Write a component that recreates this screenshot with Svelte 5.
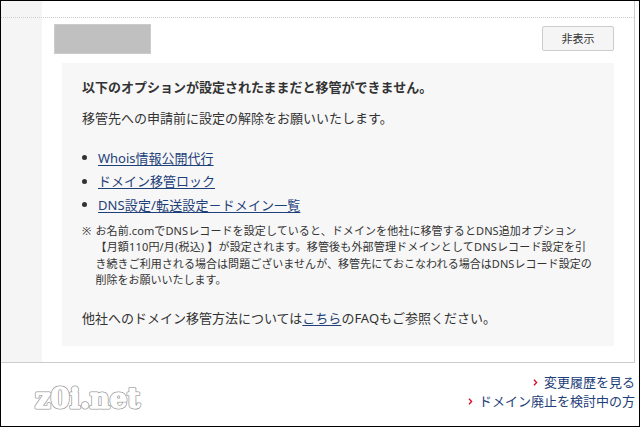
<script lang="ts">
	const options = [
		{ text: 'Whois情報公開代行', spacing: 0 },
		{ text: 'ドメイン移管ロック', spacing: 0 },
		{ text: 'DNS設定/転送設定－ドメイン一覧', spacing: 0.12 }
	];

	const noteLines = [
		{ text: 'お名前.comでDNSレコードを設定していると、ドメインを他社に移管するとDNS追加オプション', spacing: 0.1 },
		{ text: '【月額110円/月(税込) 】が設定されます。移管後も外部管理ドメインとしてDNSレコード設定を引', spacing: 0.17 },
		{ text: 'き続きご利用される場合は問題ございませんが、移管先にておこなわれる場合はDNSレコード設定の', spacing: 0.05 },
		{ text: '削除をお願いいたします。', spacing: 0 }
	];

	const footerLinks = ['変更履歴を見る', 'ドメイン廃止を検討中の方'];
</script>

<div class="frame">
	<div class="table">
		<div class="side"></div>
		<div class="top-row"></div>
		<main class="content">
			<header class="bar">
				<div class="domain"></div>
				<button class="toggle" type="button">非表示</button>
			</header>
			<section class="panel">
				<h2>以下のオプションが設定されたままだと移管ができません。</h2>
				<p class="lead">移管先への申請前に設定の解除をお願いいたします。</p>
				<ul>
					{#each options as option}
						<li><a href="#option" style:letter-spacing="{option.spacing}px">{option.text}</a></li>
					{/each}
				</ul>
				<div class="note">
					<span class="mark">※</span>
					<div>
						{#each noteLines as line}
							<div style:letter-spacing="{line.spacing}px">{line.text}</div>
						{/each}
					</div>
				</div>
				<p class="more">他社へのドメイン移管方法については<a href="#faq">こちら</a>のFAQもご参照ください。</p>
			</section>
		</main>
	</div>
	<footer>
		<svg class="logo" width="120" height="34" viewBox="0 0 120 34">
			<defs>
				<text id="logo-text" x="6" y="26" textLength="105" lengthAdjust="spacingAndGlyphs">z0i.net</text>
			</defs>
			<use class="outline" href="#logo-text" />
			<use class="face" href="#logo-text" />
		</svg>
		<nav>
			{#each footerLinks as link}
				<a href="#link">
					<svg width="5" height="7" viewBox="0 0 5 7"><path d="M1 0.7 3.6 3.5 1 6.3" /></svg>
					{link}
				</a>
			{/each}
		</nav>
	</footer>
</div>

<style>
	:global(body) {
		margin: 0;
		background: #fff;
	}

	.frame {
		box-sizing: border-box;
		width: 640px;
		height: 427px;
		border: 1px solid #000;
		overflow: hidden;
		color: #333;
		font-family: 'Noto Sans', 'Noto Sans CJK JP', sans-serif;
		font-size: 13px;
	}

	.table {
		box-sizing: border-box;
		display: grid;
		grid-template-columns: 41px 1fr;
		grid-template-rows: 17px 1fr;
		width: 634px;
		height: 362px;
		border-right: 1px solid #ccc;
		border-bottom: 1px solid #ccc;
	}

	.side {
		grid-column: 1;
		grid-row: 1 / 3;
		background: #f5f5f5;
	}

	.top-row {
		grid-column: 1 / 3;
		grid-row: 1;
		border-bottom: 1px dotted #ccc;
	}

	.content {
		grid-column: 2;
		grid-row: 2;
		padding: 6px 20px 0 12px;
	}

	.bar {
		display: flex;
		justify-content: space-between;
		height: 39px;
	}

	.domain {
		box-sizing: border-box;
		width: 97px;
		height: 30px;
		border: 1px solid #ccc;
		background: #c0c0c0;
	}

	.toggle {
		box-sizing: border-box;
		width: 72px;
		height: 25px;
		margin-top: 2px;
		padding: 0;
		border: 1px solid #ccc;
		border-radius: 2px;
		background: #f5f5f5;
		color: #333;
		font: 11px/21px 'Noto Sans', 'Noto Sans CJK JP', sans-serif;
	}

	.panel {
		box-sizing: border-box;
		height: 283px;
		margin-left: 8px;
		padding: 14px 0 0 20px;
		background: #f7f7f7;
	}

	h2,
	p {
		margin: 0;
		font-size: 13px;
		line-height: 20px;
		white-space: nowrap;
	}

	.lead {
		margin-top: 11px;
	}

	ul {
		margin: 18px 0 0;
		padding: 0;
		list-style: none;
	}

	li {
		display: flex;
		align-items: center;
		height: 23.5px;
		line-height: 20px;
	}

	li::before {
		content: '';
		width: 5px;
		height: 5px;
		margin-right: 11px;
		border-radius: 50%;
		background: #333;
	}

	a {
		color: #1d4079;
		text-underline-offset: 2px;
	}

	.note {
		display: flex;
		gap: 2px;
		margin-top: 6px;
		font-size: 11px;
		line-height: 16.6px;
		white-space: nowrap;
	}

	.mark {
		width: 11.5px;
	}

	.more {
		margin-top: 19px;
	}

	footer {
		display: flex;
		justify-content: space-between;
		padding: 10px 4px 0 28px;
	}

	.logo {
		margin-top: 9px;
		font-family: 'DejaVu Serif', serif;
		font-size: 27px;
		font-weight: bold;
		fill: #fff;
		stroke-linejoin: round;
	}

	.outline {
		stroke: #999;
		stroke-width: 2.8px;
	}

	.face {
		stroke: #fff;
		stroke-width: 1.3px;
	}

	nav {
		display: flex;
		flex-direction: column;
		align-items: flex-end;
	}

	nav a {
		display: flex;
		align-items: center;
		gap: 6px;
		line-height: 19px;
		text-decoration: none;
	}

	nav path {
		fill: none;
		stroke: #d8112b;
		stroke-width: 1.4;
	}
</style>
